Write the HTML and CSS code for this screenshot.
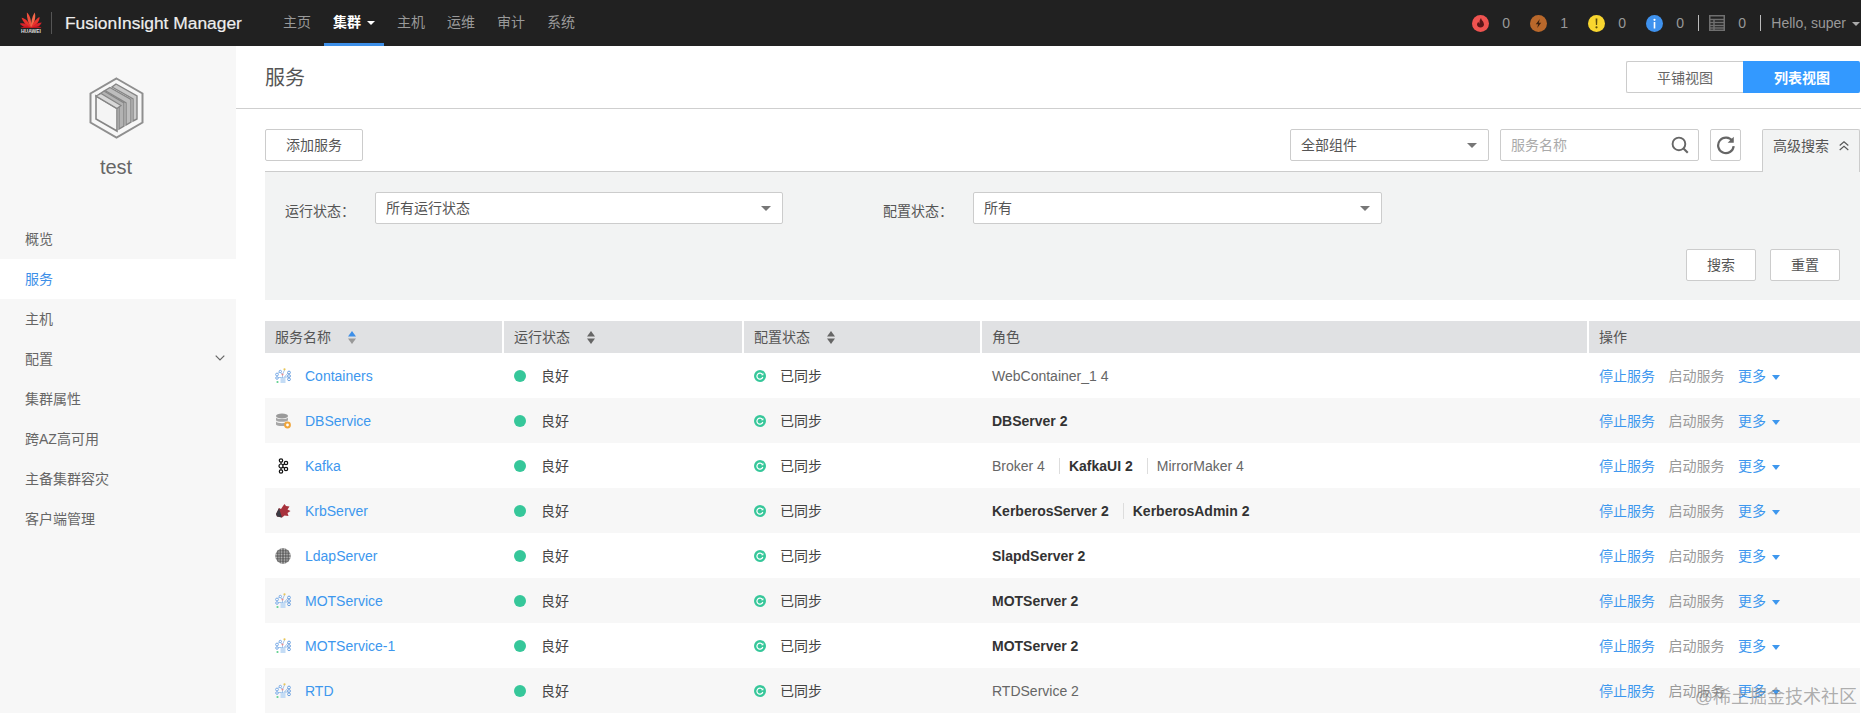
FILE: index.html
```html
<!DOCTYPE html>
<html lang="zh-CN">
<head>
<meta charset="utf-8">
<title>FusionInsight Manager</title>
<link rel="stylesheet" href="styles.css">
</head>
<body>
<svg class="sprite" aria-hidden="true">
  <defs>
    <symbol id="i-net" viewBox="0 0 16 16">
      <rect x="5.500" y="9" width="5" height="6" fill="#c4dcf5"/>
      <path d="M2.500 5.500L5 4L7.500 6.500V10M7.500 6.500L9.500 2M9.500 9L13 5M9.500 9H13M3 9.500H6.500" fill="none" stroke="#8db6e6" stroke-width=".8"/>
      <circle cx="2" cy="6.500" r="1.400" fill="#fff" stroke="#6ea4e4" stroke-width=".9"/>
      <circle cx="5.300" cy="3.500" r="1.200" fill="#fff" stroke="#6ea4e4" stroke-width=".9"/>
      <circle cx="14" cy="4.500" r="1.400" fill="#fff" stroke="#5e97dc" stroke-width=".9"/>
      <circle cx="14" cy="8" r="1.400" fill="#fff" stroke="#5e97dc" stroke-width=".9"/>
      <circle cx="14" cy="11.300" r="1.400" fill="#fff" stroke="#5e97dc" stroke-width=".9"/>
      <circle cx="2" cy="10" r="1.300" fill="#fff" stroke="#6ea4e4" stroke-width=".9"/>
      <circle cx="2.500" cy="14" r="1.100" fill="#5fd08f"/>
      <circle cx="9.500" cy="1.300" r="1.100" fill="#e8c65a"/>
      <circle cx="7.500" cy="6.500" r="1" fill="#e88a8a"/>
    </symbol>
    <symbol id="i-db" viewBox="0 0 16 16">
      <ellipse cx="7" cy="3" rx="6" ry="2.500" fill="#9a9a9a"/>
      <path d="M1 4.500C2 6.600 12 6.600 13 4.500V7.200C12 9.300 2 9.300 1 7.200Z" fill="#a6a6a6"/>
      <path d="M1 8.600C2 10.700 12 10.700 13 8.600V11.400C12 13.500 2 13.500 1 11.400Z" fill="#a6a6a6"/>
      <circle cx="12.500" cy="12" r="2.400" fill="#fff" stroke="#f0a53a" stroke-width="2"/>
    </symbol>
    <symbol id="i-kafka" viewBox="0 0 16 16">
      <path d="M6 3V13M6 8L11 5M6 8L11 11" stroke="#111" stroke-width="1.100" fill="none"/>
      <g fill="#fff" stroke="#111" stroke-width="1.200">
        <circle cx="6" cy="2.500" r="1.700"/><circle cx="6" cy="8" r="2"/><circle cx="6" cy="13.500" r="1.700"/>
        <circle cx="11" cy="5" r="1.700"/><circle cx="11" cy="11" r="1.700"/>
      </g>
    </symbol>
    <symbol id="i-krb" viewBox="0 0 16 16">
      <path d="M1 11L4 5L6 6L8 3L9.500 1L11 3L14.500 3.500L12.500 6.500L15.500 8L12.500 10L13.500 13L9.500 12.500L7 14.500L2 13.500Z" fill="#a8323c"/>
      <path d="M1 11L4 5L5.500 10L7 14.500L2 13.500Z" fill="#3c3c44"/>
    </symbol>
    <symbol id="i-ldap" viewBox="0 0 16 16">
      <defs>
        <pattern id="dots" width="2.670" height="2.670" patternUnits="userSpaceOnUse">
          <rect width="2.670" height="2.670" fill="#5c5c5c"/>
          <circle cx="1.330" cy="1.330" r=".800" fill="#cfcfcf"/>
        </pattern>
      </defs>
      <circle cx="8" cy="8" r="7.700" fill="url(#dots)"/>
    </symbol>
    <symbol id="i-sync" viewBox="0 0 12 12">
      <circle cx="6" cy="6" r="6" fill="#36c79a"/>
      <path d="M8.400 4.400A3 3 0 1 0 8.800 7" fill="none" stroke="#fff" stroke-width="1.200"/>
      <path d="M9.400 2.900V5.200H7.100Z" fill="#fff"/>
    </symbol>
    <symbol id="i-sort" viewBox="0 0 8 13">
      <path class="sort-up" d="M4 0L8 5.500H0Z"/>
      <path class="sort-down" d="M4 13L0 7.500H8Z"/>
    </symbol>
  </defs>
</svg>

<header class="topbar">
  <div class="logo">
    <svg class="logo-mark" viewBox="0 0 22 17" aria-hidden="true">
      <g transform="translate(11 17)">
        <path fill="#f0503c" d="M0 0C-1.600-5-1.700-11-.3-16 2.200-13 2.400-6 0 0Z" transform="rotate(-14)"/>
        <path fill="#f4684a" d="M0 0C-1.600-5-1.700-11-.3-16 2.200-13 2.400-6 0 0Z" transform="rotate(14)"/>
        <path fill="#e8332c" d="M0 0C-2-4.500-2.200-10-.6-14 2-11.500 2.400-5.500 0 0Z" transform="rotate(-40)"/>
        <path fill="#e8332c" d="M0 0C-2-4.500-2.200-10-.6-14 2-11.500 2.400-5.500 0 0Z" transform="rotate(40)"/>
        <path fill="#d8222a" d="M0 0C-2-4-2.200-8-.6-12 2-9.500 2.400-4.500 0 0Z" transform="rotate(-66)"/>
        <path fill="#d8222a" d="M0 0C-2-4-2.200-8-.6-12 2-9.500 2.400-4.500 0 0Z" transform="rotate(66)"/>
        <path fill="#bd141c" d="M0 0C-1.600-3.500-1.800-7-.5-10.500 1.600-8 2-3.500 0 0Z" transform="rotate(-88)"/>
        <path fill="#bd141c" d="M0 0C-1.600-3.500-1.800-7-.5-10.500 1.600-8 2-3.500 0 0Z" transform="rotate(88)"/>
      </g>
    </svg>
    <span class="logo-word">HUAWEI</span>
  </div>
  <span class="logo-divider"></span>
  <span class="brand">FusionInsight Manager</span>
  <nav class="nav">
    <a class="nav-item">主页</a>
    <a class="nav-item is-active">集群<i class="caret caret-white"></i></a>
    <a class="nav-item">主机</a>
    <a class="nav-item">运维</a>
    <a class="nav-item">审计</a>
    <a class="nav-item">系统</a>
  </nav>
  <div class="alarms">
    <span class="alarm">
      <svg class="alarm-icon" viewBox="0 0 17 17"><circle cx="8.500" cy="8.500" r="8.500" fill="#ef5350"/><path d="M9 3C9.500 5.500 12 6.500 12 9.800A3.600 3.600 0 0 1 5 9.800C5 8.300 5.800 7.400 6.500 6.700C6.600 7.700 7 8.200 7.500 8.400C7.300 6.500 7.800 4.500 9 3Z" fill="#5a1518"/></svg>
      <b class="alarm-num">0</b>
    </span>
    <span class="alarm">
      <svg class="alarm-icon" viewBox="0 0 17 17"><circle cx="8.500" cy="8.500" r="8.500" fill="#b9682b"/><path d="M9.800 4L5.800 9.300H8.200L7.200 13L11.200 7.700H8.800Z" fill="#3a2110"/></svg>
      <b class="alarm-num">1</b>
    </span>
    <span class="alarm">
      <svg class="alarm-icon" viewBox="0 0 17 17"><circle cx="8.500" cy="8.500" r="8.500" fill="#f8d62f"/><path d="M7.600 3.500H9.400L9.100 10H7.900Z" fill="#5b4c0c"/><circle cx="8.500" cy="12.300" r="1.100" fill="#5b4c0c"/></svg>
      <b class="alarm-num">0</b>
    </span>
    <span class="alarm">
      <svg class="alarm-icon" viewBox="0 0 17 17"><circle cx="8.500" cy="8.500" r="8.500" fill="#3f92ee"/><rect x="7.700" y="7" width="1.600" height="6.500" fill="#fff"/><circle cx="8.500" cy="4.800" r="1.100" fill="#fff"/></svg>
      <b class="alarm-num">0</b>
    </span>
    <span class="bar-divider"></span>
    <span class="alarm alarm-tasks">
      <svg class="tasks-icon" viewBox="0 0 16 16"><path d="M.75.75H15.250V15.250H.75ZM.75 4.500H15.250M.75 7.500H15.250M.75 10.500H15.250M.75 13H15.250M5 4.500V15.250" fill="none" stroke="#6f6f6f" stroke-width="1.500"/></svg>
      <b class="alarm-num">0</b>
    </span>
    <span class="bar-divider"></span>
    <span class="hello">Hello, super<i class="caret caret-grey"></i></span>
  </div>
</header>

<div class="layout">
  <aside class="sidebar">
    <div class="cluster">
      <svg class="cluster-icon" viewBox="0 0 55 62" aria-hidden="true">
        <path d="M27.500 1.500L53.500 16.500V45.500L27.500 60.500L1.500 45.500V16.500Z" fill="none" stroke="#8f8f8f" stroke-width="2"/>
        <path d="M27 7L48 19V42L44 44V22L23 10Z" fill="#c9c9c9" stroke="#858585" stroke-width="1.400"/>
        <path d="M21 10.500L42 22.500V45L37 48V26L16 13.500Z" fill="#bdbdbd" stroke="#858585" stroke-width="1.400"/>
        <path d="M15 14L35 26V49L30 52V29.500L10 17.500Z" fill="#b2b2b2" stroke="#858585" stroke-width="1.400"/>
        <path d="M7 19L28 31.500V54L7 42Z" fill="#f4f4f4" stroke="#858585" stroke-width="1.600"/>
        <path d="M7 19L12 16.500L32 28.500L28 31.500Z" fill="#d8d8d8" stroke="#858585" stroke-width="1.200"/>
      </svg>
      <div class="cluster-name">test</div>
    </div>
    <ul class="side-menu">
      <li class="side-item">概览</li>
      <li class="side-item is-active">服务</li>
      <li class="side-item">主机</li>
      <li class="side-item">配置
        <svg class="side-chevron" viewBox="0 0 10 6"><path d="M.7.7L5 5L9.300.7" fill="none" stroke="#666" stroke-width="1.200"/></svg>
      </li>
      <li class="side-item">集群属性</li>
      <li class="side-item">跨AZ高可用</li>
      <li class="side-item">主备集群容灾</li>
      <li class="side-item">客户端管理</li>
    </ul>
  </aside>

  <main class="main">
    <div class="page-head">
      <h1 class="page-title">服务</h1>
      <div class="view-toggle">
        <button class="view-btn">平铺视图</button>
        <button class="view-btn is-on">列表视图</button>
      </div>
    </div>

    <div class="toolbar">
      <button class="btn btn-add">添加服务</button>
      <div class="toolbar-right">
        <div class="select select-comp"><span>全部组件</span><i class="caret caret-dark"></i></div>
        <div class="search"><span class="placeholder">服务名称</span>
          <svg class="search-icon" viewBox="0 0 17 17"><circle cx="7.500" cy="7.500" r="6" fill="none" stroke="#666" stroke-width="1.800"/><path d="M11.800 11.800L15.800 15.800" stroke="#666" stroke-width="2"/></svg>
        </div>
        <button class="btn btn-refresh">
          <svg class="refresh-icon" viewBox="0 0 18 18"><path d="M14.800 5.500A7 7 0 1 0 15.900 10" fill="none" stroke="#666" stroke-width="2"/><path d="M16 1.500V7H10.500Z" fill="#666"/></svg>
        </button>
        <div class="adv-tab">高级搜索
          <svg class="adv-chevron" viewBox="0 0 10 10"><path d="M.7 4.500L5 .8L9.300 4.500M.7 9L5 5.300L9.300 9" fill="none" stroke="#555" stroke-width="1.100"/></svg>
        </div>
      </div>
    </div>

    <section class="panel">
      <div class="filters">
        <div class="filter">
          <label class="filter-label">运行状态：</label>
          <div class="select select-status"><span>所有运行状态</span><i class="caret caret-dark"></i></div>
        </div>
        <div class="filter">
          <label class="filter-label">配置状态：</label>
          <div class="select select-config"><span>所有</span><i class="caret caret-dark"></i></div>
        </div>
      </div>
      <div class="panel-actions">
        <button class="btn btn-panel">搜索</button>
        <button class="btn btn-panel">重置</button>
      </div>
    </section>

    <table class="services">
      <colgroup>
        <col class="col-name"><col class="col-run"><col class="col-conf"><col class="col-role"><col class="col-op">
      </colgroup>
      <thead>
        <tr>
          <th>服务名称<svg class="sort sort-active"><use href="#i-sort"/></svg></th>
          <th>运行状态<svg class="sort"><use href="#i-sort"/></svg></th>
          <th>配置状态<svg class="sort"><use href="#i-sort"/></svg></th>
          <th>角色</th>
          <th>操作</th>
        </tr>
      </thead>
      <tbody>
        <tr>
          <td class="cell-latin"><svg class="svc-icon"><use href="#i-net"/></svg><a class="link svc-name">Containers</a></td>
          <td><i class="dot"></i>良好</td>
          <td><svg class="sync"><use href="#i-sync"/></svg>已同步</td>
          <td class="cell-latin"><span class="role">WebContainer_1 4</span></td>
          <td class="ops"><a class="link">停止服务</a><span class="muted">启动服务</span><a class="link">更多<i class="caret caret-blue"></i></a></td>
        </tr>
        <tr>
          <td class="cell-latin"><svg class="svc-icon"><use href="#i-db"/></svg><a class="link svc-name">DBService</a></td>
          <td><i class="dot"></i>良好</td>
          <td><svg class="sync"><use href="#i-sync"/></svg>已同步</td>
          <td class="cell-latin"><span class="role role-main">DBServer 2</span></td>
          <td class="ops"><a class="link">停止服务</a><span class="muted">启动服务</span><a class="link">更多<i class="caret caret-blue"></i></a></td>
        </tr>
        <tr>
          <td class="cell-latin"><svg class="svc-icon"><use href="#i-kafka"/></svg><a class="link svc-name">Kafka</a></td>
          <td><i class="dot"></i>良好</td>
          <td><svg class="sync"><use href="#i-sync"/></svg>已同步</td>
          <td class="cell-latin"><span class="role">Broker 4</span><span class="role role-main">KafkaUI 2</span><span class="role">MirrorMaker 4</span></td>
          <td class="ops"><a class="link">停止服务</a><span class="muted">启动服务</span><a class="link">更多<i class="caret caret-blue"></i></a></td>
        </tr>
        <tr>
          <td class="cell-latin"><svg class="svc-icon"><use href="#i-krb"/></svg><a class="link svc-name">KrbServer</a></td>
          <td><i class="dot"></i>良好</td>
          <td><svg class="sync"><use href="#i-sync"/></svg>已同步</td>
          <td class="cell-latin"><span class="role role-main">KerberosServer 2</span><span class="role role-main">KerberosAdmin 2</span></td>
          <td class="ops"><a class="link">停止服务</a><span class="muted">启动服务</span><a class="link">更多<i class="caret caret-blue"></i></a></td>
        </tr>
        <tr>
          <td class="cell-latin"><svg class="svc-icon"><use href="#i-ldap"/></svg><a class="link svc-name">LdapServer</a></td>
          <td><i class="dot"></i>良好</td>
          <td><svg class="sync"><use href="#i-sync"/></svg>已同步</td>
          <td class="cell-latin"><span class="role role-main">SlapdServer 2</span></td>
          <td class="ops"><a class="link">停止服务</a><span class="muted">启动服务</span><a class="link">更多<i class="caret caret-blue"></i></a></td>
        </tr>
        <tr>
          <td class="cell-latin"><svg class="svc-icon"><use href="#i-net"/></svg><a class="link svc-name">MOTService</a></td>
          <td><i class="dot"></i>良好</td>
          <td><svg class="sync"><use href="#i-sync"/></svg>已同步</td>
          <td class="cell-latin"><span class="role role-main">MOTServer 2</span></td>
          <td class="ops"><a class="link">停止服务</a><span class="muted">启动服务</span><a class="link">更多<i class="caret caret-blue"></i></a></td>
        </tr>
        <tr>
          <td class="cell-latin"><svg class="svc-icon"><use href="#i-net"/></svg><a class="link svc-name">MOTService-1</a></td>
          <td><i class="dot"></i>良好</td>
          <td><svg class="sync"><use href="#i-sync"/></svg>已同步</td>
          <td class="cell-latin"><span class="role role-main">MOTServer 2</span></td>
          <td class="ops"><a class="link">停止服务</a><span class="muted">启动服务</span><a class="link">更多<i class="caret caret-blue"></i></a></td>
        </tr>
        <tr>
          <td class="cell-latin"><svg class="svc-icon"><use href="#i-net"/></svg><a class="link svc-name">RTD</a></td>
          <td><i class="dot"></i>良好</td>
          <td><svg class="sync"><use href="#i-sync"/></svg>已同步</td>
          <td class="cell-latin"><span class="role">RTDService 2</span></td>
          <td class="ops"><a class="link">停止服务</a><span class="muted">启动服务</span><a class="link">更多<i class="caret caret-blue"></i></a></td>
        </tr>
      </tbody>
    </table>
  </main>
</div>
<div class="watermark">@稀土掘金技术社区</div>
</body>
</html>
```
FILE: styles.css
```css
* { box-sizing: border-box; }
html, body { height: 100%; }
body {
  margin: 0;
  overflow: hidden;
  position: relative;
  font-family: "Liberation Sans", "Noto Sans CJK SC", sans-serif;
  font-size: 14px;
  color: #555;
  background: #fff;
}
.sprite { position: absolute; width: 0; height: 0; }
button { font: inherit; cursor: pointer; }
ul { list-style: none; margin: 0; padding: 0; }
i { font-style: normal; }

/* carets */
.caret {
  display: inline-block;
  width: 0;
  height: 0;
  border-left: 4px solid transparent;
  border-right: 4px solid transparent;
  border-top: 4px solid #fff;
  vertical-align: middle;
}
.caret-white { margin-left: 6px; }
.caret-grey { border-top-color: #aaa; margin-left: 6px; }
.caret-blue { border-top-color: #3d97ee; border-top-width: 5px; margin-left: 6px; }
.caret-dark { border-left-width: 5px; border-right-width: 5px; border-top-width: 5px; border-top-color: #777; }

/* top bar */
.topbar {
  height: 46px;
  background: #212121;
  display: flex;
  align-items: center;
  padding-left: 20px;
}
.logo { width: 22px; display: flex; flex-direction: column; align-items: center; }
.logo-mark { width: 22px; height: 17px; display: block; }
.logo-word { font-size: 5px; line-height: 7px; color: #ddd; font-weight: 700; }
.logo-divider { width: 1px; height: 22px; background: #555; margin-left: 9px; }
.brand { margin-left: 13px; font-size: 17.400px; color: #eee; -webkit-text-stroke: .2px #eee; white-space: nowrap; }
.nav { display: flex; height: 46px; margin-left: 32px; }
.nav-item {
  padding: 0 9px;
  margin-right: 4px;
  line-height: 44px;
  color: #999;
  white-space: nowrap;
}
.nav-item.is-active {
  color: #fff;
  font-weight: 700;
  border-bottom: 3px solid #3d8fe8;
}
.alarms { margin-left: auto; display: flex; align-items: center; padding-right: 1px; color: #999; }
.alarm { display: flex; align-items: center; margin-right: 20px; }
.alarm-icon { width: 17px; height: 17px; display: block; }
.alarm-num { font-weight: 400; margin-left: 13px; width: 8px; }
.bar-divider { width: 1px; height: 16px; background: #bbb; }
.alarm:nth-child(4) { margin-right: 14px; }
.alarm-tasks { margin: 0 14px 0 10px; }
.tasks-icon { width: 16px; height: 16px; display: block; }
.hello { margin-left: 10px; white-space: nowrap; }

/* shell */
.layout { display: flex; height: 667px; overflow: hidden; }
.sidebar { width: 236px; flex: none; background: #f7f7f7; }
.cluster { padding: 31px 4px 0 0; text-align: center; }
.cluster-icon { width: 55px; height: 62px; display: block; margin: 0 auto; }
.cluster-name { font-size: 20px; line-height: 24px; margin-top: 16px; color: #666; }
.side-menu { margin-top: 40px; }
.side-item {
  height: 40px;
  line-height: 40px;
  padding: 0 10px 0 25px;
  color: #666;
  display: flex;
  align-items: center;
  justify-content: space-between;
}
.side-item.is-active { background: #fff; color: #3d8fe8; }
.side-chevron { width: 10px; height: 6px; margin-right: 1px; margin-top: -3px; }

/* content */
.main { flex: 1; min-width: 0; }
.page-head {
  height: 63px;
  border-bottom: 1px solid #cfcfcf;
  padding: 0 1px 0 29px;
  display: flex;
  align-items: center;
  justify-content: space-between;
}
.page-title { margin: 0; padding-bottom: 2px; font-size: 20px; font-weight: 400; color: #555; }
.view-toggle { display: flex; }
.view-btn {
  width: 117px;
  height: 32px;
  padding: 0 0 1px;
  border: 1px solid #ccc;
  border-right: 0;
  background: #fff;
  color: #666;
  border-radius: 2px 0 0 2px;
}
.view-btn.is-on {
  background: #3399ff;
  border-color: #3399ff;
  color: #fff;
  font-weight: 700;
  border-radius: 0 2px 2px 0;
}
.btn {
  height: 32px;
  padding: 0 0 2px;
  background: #fff;
  border: 1px solid #ccc;
  border-radius: 2px;
  color: #555;
}
.toolbar {
  height: 42px;
  margin-top: 20px;
  padding: 0 1px 0 29px;
  display: flex;
  justify-content: space-between;
  align-items: flex-start;
}
.btn-add { width: 98px; }
.toolbar-right { display: flex; align-items: flex-start; gap: 11px; }
.select {
  height: 32px;
  display: flex;
  align-items: center;
  justify-content: space-between;
  padding: 0 11px 2px 10px;
  background: #fff;
  border: 1px solid #ccc;
  border-radius: 2px;
  color: #555;
}
.select .caret { margin-top: 2px; }
.select-comp { width: 199px; }
.select-status { width: 408px; }
.select-config { width: 409px; }
.search {
  width: 199px;
  height: 32px;
  display: flex;
  align-items: center;
  justify-content: space-between;
  padding: 0 9px 2px 10px;
  border: 1px solid #ccc;
  border-radius: 2px;
}
.placeholder { color: #aaa; }
.search-icon { width: 18px; height: 18px; margin-top: 2px; }
.btn-refresh { width: 31px; padding: 0; display: flex; align-items: center; justify-content: center; }
.refresh-icon { width: 20px; height: 20px; }
.adv-tab {
  position: relative;
  z-index: 1;
  width: 98px;
  height: 43px;
  margin-left: 10px;
  padding: 5px 0 0 10px;
  background: #f2f3f3;
  border: 1px solid #ccc;
  border-bottom: 0;
  border-radius: 2px 2px 0 0;
  color: #555;
  white-space: nowrap;
}
.adv-chevron { width: 10px; height: 10px; margin-left: 6px; }
.panel {
  height: 129px;
  border-top: 1px solid #ccc;
  background: #f2f3f3;
  margin: 0 1px 0 29px;
  padding: 20px 20px 0;
}
.filters { display: flex; }
.filter { display: flex; align-items: center; margin-right: 100px; }
.filter-label { width: 90px; color: #555; padding-top: 3px; }
.panel-actions { display: flex; justify-content: flex-end; gap: 14px; margin-top: 25px; }
.btn-panel { width: 70px; }

/* table */
.services {
  table-layout: fixed;
  border-collapse: separate;
  border-spacing: 0;
  width: 1595px;
  margin: 21px 0 0 29px;
}
.col-name { width: 239px; }
.col-run { width: 240px; }
.col-conf { width: 238px; }
.col-role { width: 607px; }
.col-op { width: 271px; }
.services th {
  height: 32px;
  padding: 0 10px 2px;
  text-align: left;
  font-weight: 400;
  background: #e0e1e3;
  border-right: 2px solid #fff;
  color: #555;
}
.services th:last-child { border-right: 0; }
.services td {
  height: 45px;
  padding: 0 10px 1px;
  color: #444;
  white-space: nowrap;
}
.services td.cell-latin { padding-bottom: 0; padding-top: 1px; }
.services tbody tr:nth-child(even) { background: #f7f7f7; }
.sort { --up: #666; --down: #666; width: 8px; height: 13px; margin-left: 17px; vertical-align: -2px; }
.sort-up { fill: var(--up); }
.sort-down { fill: var(--down); }
.sort-active { --up: #3d8fe8; --down: #999; }
.svc-icon { width: 16px; height: 16px; vertical-align: -3px; }
.svc-name { margin-left: 14px; }
.services td .link { color: #3d97ee; }
.dot {
  display: inline-block;
  width: 12px;
  height: 12px;
  border-radius: 50%;
  background: #36c79a;
  margin-right: 15px;
  vertical-align: -1px;
}
.sync { width: 12px; height: 12px; margin-right: 14px; vertical-align: -1px; }
.role { color: #666; }
.role-main { color: #333; font-weight: 700; }
.role + .role { margin-left: 14px; padding-left: 9px; border-left: 1px solid #ddd; }
.muted { color: #999; margin: 0 13.500px; }

.watermark {
  position: absolute;
  right: 4px;
  bottom: 4px;
  font-size: 18px;
  line-height: 24px;
  color: rgba(110, 110, 110, .55);
  white-space: nowrap;
}
```
